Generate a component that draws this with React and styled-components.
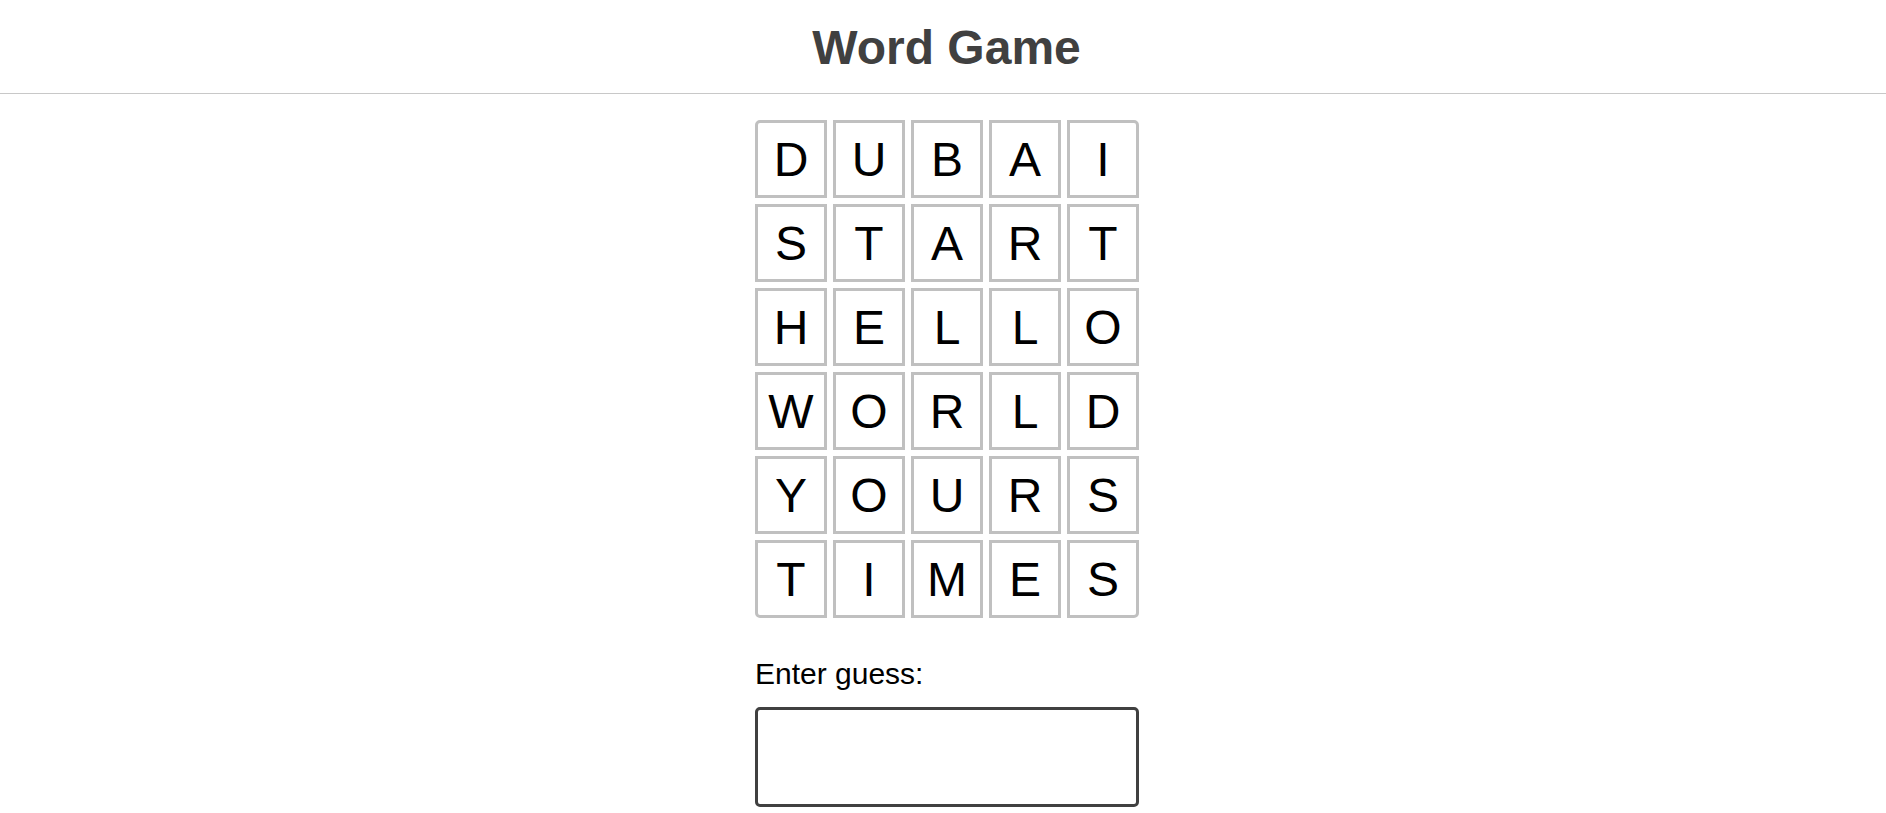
import React, { useState } from 'react'
import styled, { createGlobalStyle } from 'styled-components'

const GlobalStyle = createGlobalStyle`
  body {
    margin: 0;
    background: #ffffff;
    font-family: "Liberation Sans", Arial, sans-serif;
  }
`;

const Header = styled.header`
  height: 93px;
  padding-left: 7px;
  display: flex;
  align-items: center;
  justify-content: center;
  border-bottom: 1px solid #c8c8c8;
`;

const Title = styled.h1`
  margin: 0;
  padding-top: 2px;
  font-size: 48px;
  font-weight: 700;
  color: #404040;
`;

const Content = styled.div`
  padding-left: 8px;
`;

const Main = styled.main`
  width: 384px;
  margin: 0 auto;
  padding-top: 26px;
`;

const Board = styled.div`
  display: grid;
  grid-template-columns: repeat(5, 72px);
  grid-auto-rows: 78px;
  gap: 6px;
`;

const Cell = styled.div`
  box-sizing: border-box;
  display: flex;
  align-items: center;
  justify-content: center;
  border: 3px solid #c0c0c0;
  font-size: 48px;
  color: #000;
  border-top-left-radius: ${({ $corner }) => ($corner === 'tl' ? '5px' : '0')};
  border-top-right-radius: ${({ $corner }) => ($corner === 'tr' ? '5px' : '0')};
  border-bottom-left-radius: ${({ $corner }) => ($corner === 'bl' ? '5px' : '0')};
  border-bottom-right-radius: ${({ $corner }) => ($corner === 'br' ? '5px' : '0')};
`;

const Label = styled.label`
  display: block;
  margin-top: 39px;
  font-size: 30px;
  color: #000;
`;

const GuessInput = styled.input`
  box-sizing: border-box;
  display: block;
  width: 384px;
  height: 100px;
  margin-top: 16px;
  border: 3px solid #404040;
  border-radius: 5px;
  font-family: inherit;
  font-size: 30px;
  padding: 0 12px;
  outline: none;
`;

const words = ['DUBAI', 'START', 'HELLO', 'WORLD', 'YOURS', 'TIMES'];

const cornerOf = (r, c) => {
  if (r === 0 && c === 0) return 'tl';
  if (r === 0 && c === 4) return 'tr';
  if (r === words.length - 1 && c === 0) return 'bl';
  if (r === words.length - 1 && c === 4) return 'br';
  return '';
};

const App = () => {
  const [guess, setGuess] = useState('');
  return (
    <>
      <GlobalStyle />
      <Header>
        <Title>Word Game</Title>
      </Header>
      <Content>
        <Main>
          <Board>
            {words.map((w, r) =>
              w.split('').map((ch, c) => (
                <Cell key={`${r}-${c}`} $corner={cornerOf(r, c)}>{ch}</Cell>
              ))
            )}
          </Board>
          <Label htmlFor="guess">Enter guess:</Label>
          <GuessInput id="guess" value={guess} onChange={e => setGuess(e.target.value)} />
        </Main>
      </Content>
    </>
  )
}

export default App
